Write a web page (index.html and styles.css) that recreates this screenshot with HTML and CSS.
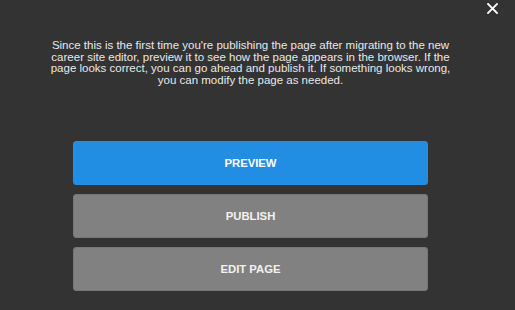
FILE: index.html
```html
<!DOCTYPE html>
<html lang="en">
<head>
  <meta charset="utf-8"/>
  <title>Publish page</title>
  <link rel="stylesheet" href="styles.css">
</head>
<body>
  <div class="modal">
    <button class="close" aria-label="Close">
      <svg width="11" height="11" viewBox="0 0 11 11"><path d="M1 1L10 10M10 1L1 10" stroke="#fff" stroke-width="1.8" stroke-linecap="square"/></svg>
    </button>

    <p class="message">Since this is the first time you're publishing the page after migrating to the new career site editor, preview it to see how the page appears in the browser. If the page looks correct, you can go ahead and publish it. If something looks wrong, you can modify the page as needed.</p>

    <div class="actions">
      <button class="action primary">PREVIEW</button>
      <button class="action">PUBLISH</button>
      <button class="action">EDIT PAGE</button>
    </div>
  </div>
</body>
</html>
```

FILE: styles.css
```css
body {
  margin: 0;
  background-color: #333333;
  font-family: "Liberation Sans", Arial, sans-serif;
}
.modal {
  position: relative;
  height: 310px;
  padding: 40px 14px 0 0;
  box-sizing: border-box;
}
.close {
  position: absolute;
  top: 3px;
  right: 17px;
  padding: 0;
  border: none;
  background: none;
  cursor: pointer;
  line-height: 0;
}
.message {
  width: 402px;
  margin: 0 auto;
  color: #e8e8e8;
  font-size: 11.5px;
  line-height: 11.7px;
  text-align: center;
}
.actions {
  width: 355px;
  margin: 54px auto 0;
  display: flex;
  flex-direction: column;
  gap: 9px;
}
.action {
  height: 44px;
  border: 1px solid #777;
  border-radius: 3px;
  background-color: #818181;
  color: #f2f2f2;
  font-family: "Liberation Sans", Arial, sans-serif;
  font-size: 11.3px;
  font-weight: bold;
  cursor: pointer;
}
.action.primary {
  border-color: #2290e6;
  background-color: #218ee4;
  color: #fff;
}
```
